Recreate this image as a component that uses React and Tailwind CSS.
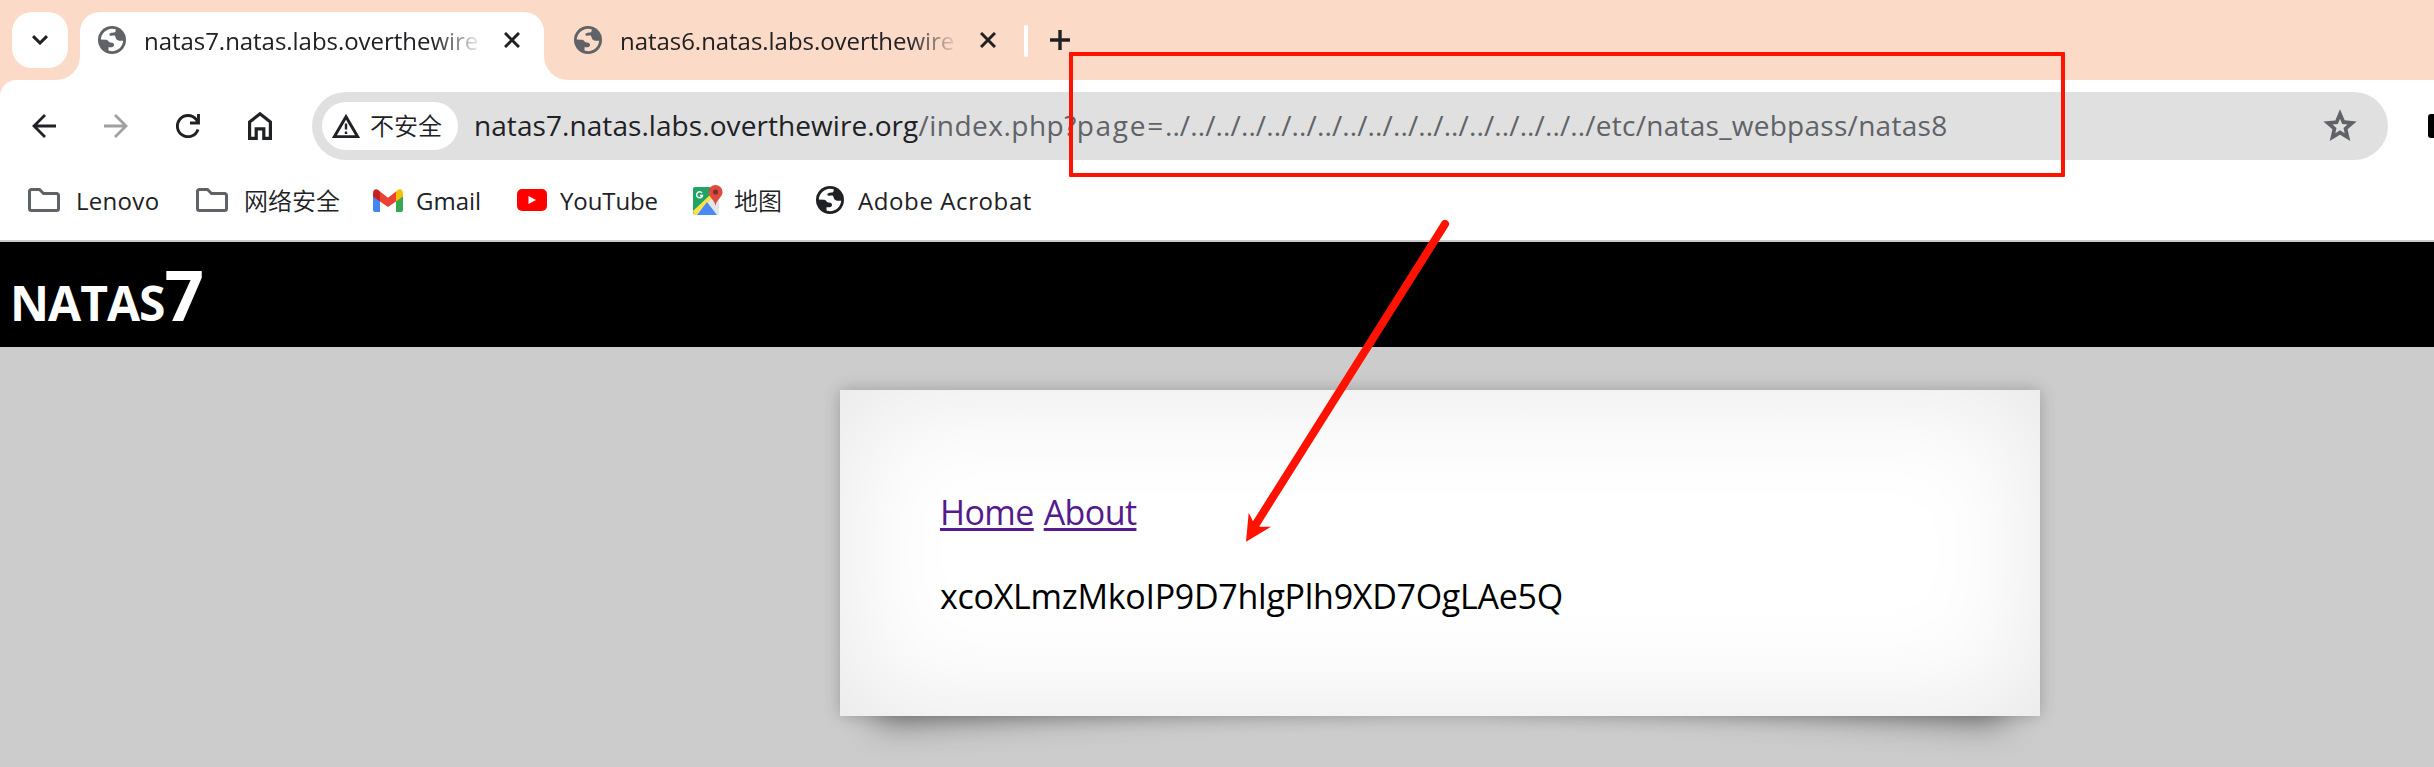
const UI = "font-['Open_Sans','Noto_Sans_CJK_SC',sans-serif]";

function Globe({ className, hole }) {
  return (
    <svg viewBox="0 0 28 28" className={className}>
      <circle cx="14" cy="14" r="14" fill="currentColor" />
      <path d="M2.8 13.6 C3 7.8 8 3 14 2.8 L17.8 3.3 L17.4 5.8 C16.4 7.2 12 6 11.4 8.4 C11.4 10.4 14 9.6 16.6 9.6 C18 11 17.4 14.2 21 14.8 H25.2 C24.5 21 20 25 14 25.2 C12.5 25.2 11 25 10.5 24.3 V21.2 H14 C16.2 21 16.4 18.8 15.6 17.6 C14 16.2 11.4 17 10.6 15.6 C10 14.2 9 13.8 7.5 13.8 Z" fill={hole} />
    </svg>
  );
}

function Close() {
  return (
    <svg viewBox="0 0 16 16" className="size-4 shrink-0">
      <path d="M1 1 15 15 M15 1 1 15" stroke="#202124" strokeWidth="3" fill="none" />
    </svg>
  );
}

function Folder() {
  return (
    <svg viewBox="0 0 32 24" className="h-6 w-8">
      <path d="M3.5 1.5 H11.5 L15.5 5.5 H28.5 Q30.5 5.5 30.5 7.5 V20.5 Q30.5 22.5 28.5 22.5 H3.5 Q1.5 22.5 1.5 20.5 V3.5 Q1.5 1.5 3.5 1.5 Z" fill="none" stroke="#5f6368" strokeWidth="3" />
    </svg>
  );
}

function TabTitle({ children }) {
  return (
    <div className="ml-[18px] h-8 w-[336px] text-2xl leading-[30px] tracking-[-0.04px] whitespace-nowrap text-[#202124] [mask-image:linear-gradient(to_right,#000_86%,transparent_101%)]">
      {children}
    </div>
  );
}

function Tabs() {
  return (
    <div className="flex h-20 items-start bg-[#fcdac8] pt-3 pl-3">
      <div className="flex size-14 items-center justify-center rounded-[20px] bg-white">
        <svg viewBox="0 0 16 10" className="h-2.5 w-4">
          <path d="M1 1.2 8 8 15 1.2" fill="none" stroke="#202124" strokeWidth="3" />
        </svg>
      </div>
      <div className="relative ml-3 flex h-[68px] w-[464px] rounded-t-[20px] bg-white pt-3.5 pl-[18px]">
        <svg viewBox="0 0 24 24" className="absolute bottom-0 -left-6 size-6"><path d="M24 0 V24 H0 A24 24 0 0 0 24 0" fill="#fff" /></svg>
        <svg viewBox="0 0 24 24" className="absolute -right-6 bottom-0 size-6"><path d="M0 0 V24 H24 A24 24 0 0 1 0 0" fill="#fff" /></svg>
        <Globe className="size-7 shrink-0 text-[#5f6368]" hole="#fff" />
        <TabTitle>natas7.natas.labs.overthewire</TabTitle>
        <div className="ml-6 pt-1.5"><Close /></div>
      </div>
      <div className="ml-[30px] flex pt-3.5">
        <Globe className="size-7 shrink-0 text-[#5f6368]" hole="#fcdac8" />
        <TabTitle>natas6.natas.labs.overthewire</TabTitle>
        <div className="ml-6 pt-1.5"><Close /></div>
      </div>
      <div className="mt-[13px] ml-7 h-8 w-1 rounded-full bg-white" />
      <svg viewBox="0 0 20 20" className="mt-[18px] ml-[22px] size-5"><path d="M10 0 V20 M0 10 H20" stroke="#202124" strokeWidth="3.4" /></svg>
    </div>
  );
}

function Star() {
  return (
    <svg viewBox="0 0 24 24" className="-mr-1 ml-auto size-10 shrink-0">
      <path d="M22 9.24l-7.19-.62L12 2 9.19 8.63 2 9.24l5.46 4.73L5.82 21 12 17.27 18.18 21l-1.63-7.03z" fill="#5f6368" />
      <path d="M12 7.7 13.3 10.8 16.5 11.05 14.1 13.15 14.8 16.3 12 14.6 9.2 16.3 9.9 13.15 7.5 11.05 10.7 10.8Z" fill="#e0e0e0" />
    </svg>
  );
}

function Toolbar() {
  return (
    <div className="flex h-20 items-center pt-3 pl-8">
      <div className="flex h-[68px] items-center">
        <svg viewBox="0 0 24 24" className="size-6"><path d="M13 1 2 12 13 23 M2 12 H24" fill="none" stroke="#202124" strokeWidth="2.8" /></svg>
        <svg viewBox="0 0 24 24" className="ml-12 size-6"><path d="M11 1 22 12 11 23 M22 12 H0" fill="none" stroke="#a0a0a0" strokeWidth="2.8" /></svg>
        <svg viewBox="0 0 24 24" className="ml-12 size-6"><path d="M22 15.5 A10.6 10.6 0 1 1 20.2 5.4 L22 8 M22.5 0 V9 H14" fill="none" stroke="#202124" strokeWidth="2.9" /></svg>
        <svg viewBox="0 0 24 28" className="ml-12 h-7 w-6"><path d="M1.6 10 12 1.8 22.4 10 V26.4 H15.8 V16.8 H8.2 V26.4 H1.6 Z" fill="none" stroke="#202124" strokeWidth="3.2" /></svg>
      </div>
      <div className="ml-10 flex h-[68px] w-[2076px] items-center rounded-full bg-[#e0e0e0] pr-8 pl-2.5">
        <div className="flex h-12 w-[136px] items-center rounded-full bg-white pl-2.5">
          <svg viewBox="0 0 28 24" className="h-6 w-7"><path d="M14 2.8 25.7 22.7 H2.3 Z" fill="none" stroke="#202124" strokeWidth="3" /><path d="M14 9.5 V15.5 M14 17.5 V20" stroke="#202124" strokeWidth="2.4" /></svg>
          <span className="ml-2.5 text-2xl leading-7 font-[350] text-[#202124]">不安全</span>
        </div>
        <div className="ml-4 pb-0.5 text-[28px] leading-10 whitespace-nowrap text-[#5f6368]">
          <span className="tracking-[0.07px] text-[#202124]">natas7.natas.labs.overthewire.org</span>
          <span className="tracking-[0.5px]">/index.php?</span>
          <span className="tracking-[1.7px]">page=</span>
          <span className="tracking-[0.12px]">../../../../../../../../../../../../../../../../../</span>
          <span className="tracking-[0.28px]">etc/natas_webpass/natas8</span>
        </div>
        <Star />
      </div>
      <div className="ml-10 h-6 w-1.5 shrink-0 rounded-l-[3px] bg-black" />
    </div>
  );
}

function Bookmarks() {
  return (
    <div className="flex h-[82px] items-center border-b-2 border-[#cccccc] pl-7 text-2xl leading-7 text-[#202124]">
      <div className="flex w-[168px] items-center"><Folder /><span className="ml-4 pt-0.5 tracking-[0.3px]">Lenovo</span></div>
      <div className="flex w-[177px] items-center"><Folder /><span className="ml-4 pt-0.5 font-[350]">网络安全</span></div>
      <div className="flex w-36 items-center">
        <svg viewBox="0 0 30 23" className="h-[23px] w-[30px]">
          <path d="M0 6 7 11 V23 H2 Q0 23 0 21 Z" fill="#4285f4" />
          <path d="M30 6 23 11 V23 H28 Q30 23 30 21 Z" fill="#34a853" />
          <path d="M23 2.5 Q27-1.5 29.4 1.8 Q30 3 30 6 L30 7.5 23 12.5 Z" fill="#fbbc04" />
          <path d="M7 2.5 Q3-1.5 .6 1.8 Q0 3 0 6 L0 7.5 7 12.5 Z" fill="#c5221f" />
          <path d="M7 2.5 15 8.7 23 2.5 V12.5 L15 18 7 12.5 Z" fill="#ea4335" />
        </svg>
        <span className="ml-[13px] pt-0.5">Gmail</span>
      </div>
      <div className="flex w-44 items-center">
        <svg viewBox="0 0 30 22" className="h-[22px] w-[30px]"><rect width="30" height="22" rx="5" fill="#f00" /><path d="M11.5 7 19 11 11.5 15 Z" fill="#fff" /></svg>
        <span className="ml-[13px] pt-0.5 tracking-[-0.1px]">YouTube</span>
      </div>
      <div className="flex w-[123px] items-center">
        <svg viewBox="0 0 30 30" className="size-[30px]">
          <rect y="2" width="26" height="28" rx="2" fill="#e3e6e8" />
          <path d="M2 2 H17 V14 L0 29 V4 Q0 2 2 2" fill="#1fa463" />
          <path d="M0 26 17 10 19 13 3 30 H1 Z" fill="#ffe047" />
          <path d="M14 17 24 30 H4 Z" fill="#4a89f3" />
          <path d="M22.5 21 C21.5 14 15.5 12.5 15.5 7 A7 7 0 0 1 29.5 7 C29.5 12.5 23.5 14 22.5 21" fill="#dd4b3e" />
          <circle cx="22.5" cy="7" r="2.6" fill="#822f2b" />
          <path d="M9 8 A3 3 0 1 0 9.5 10.5 H7" fill="none" stroke="#fff" strokeWidth="1.4" />
        </svg>
        <span className="ml-[11px] pt-0.5 font-[350]">地图</span>
      </div>
      <div className="flex items-center"><Globe className="size-7 text-[#202124]" hole="#fff" /><span className="ml-3.5 pt-0.5 tracking-[0.6px]">Adobe Acrobat</span></div>
    </div>
  );
}

export default function App() {
  return (
    <div className={`relative h-[767px] w-[2434px] overflow-hidden bg-[#cccccc] ${UI}`}>
      <Tabs />
      <div className="bg-[#fcdac8]">
        <div className="h-[162px] rounded-tl-2xl bg-white">
          <Toolbar />
          <Bookmarks />
        </div>
      </div>
      <h1 className="flex h-[105px] items-baseline bg-black pl-2.5 font-bold text-white">
        <span className="text-[48px] leading-[105px] tracking-[-1px]">NATAS</span>
        <span className="text-[69px] leading-[105px]">7</span>
      </h1>
      <main className="relative isolate mt-[43px] ml-[840px] h-[326px] w-[1200px]">
        <div className="absolute bottom-[39px] left-8 -z-10 h-[65px] w-[500px] -rotate-4 shadow-[0_30px_34px_rgba(0,0,0,0.42)]" />
        <div className="absolute right-8 bottom-[39px] -z-10 h-[65px] w-[500px] rotate-4 shadow-[0_30px_34px_rgba(0,0,0,0.42)]" />
        <div className="h-full bg-white shadow-[0_0_16px_rgba(0,0,0,0.23),inset_0_0_120px_rgba(0,0,0,0.1)]">
          <div className="flex flex-col gap-9 pt-[98px] pl-[100px] text-[34px] leading-[48px] tracking-[-0.28px]">
            <div className="flex gap-2.5 tracking-[-0.6px] text-[#551a8b]">
              <a className="underline decoration-[3px] underline-offset-[3px]">Home</a>
              <a className="underline decoration-[3px] underline-offset-[3px]">About</a>
            </div>
            <div className="text-black">xcoXLmzMkoIP9D7hlgPlh9XD7OgLAe5Q</div>
          </div>
        </div>
      </main>
      <div className="absolute top-[52px] left-[1069px] h-[125px] w-[996px] rounded-[1px] border-4 border-[#ff1200]" />
      <svg viewBox="0 0 240 340" className="absolute top-[210px] left-[1230px] h-[340px] w-60">
        <path d="M215 14 26 314" stroke="#ff1200" strokeWidth="8" strokeLinecap="round" />
        <path d="M16 331.7 18.7 302.7 23.5 312.3 30 316.7 41 316.7 Z" fill="#ff1200" />
      </svg>
    </div>
  );
}
